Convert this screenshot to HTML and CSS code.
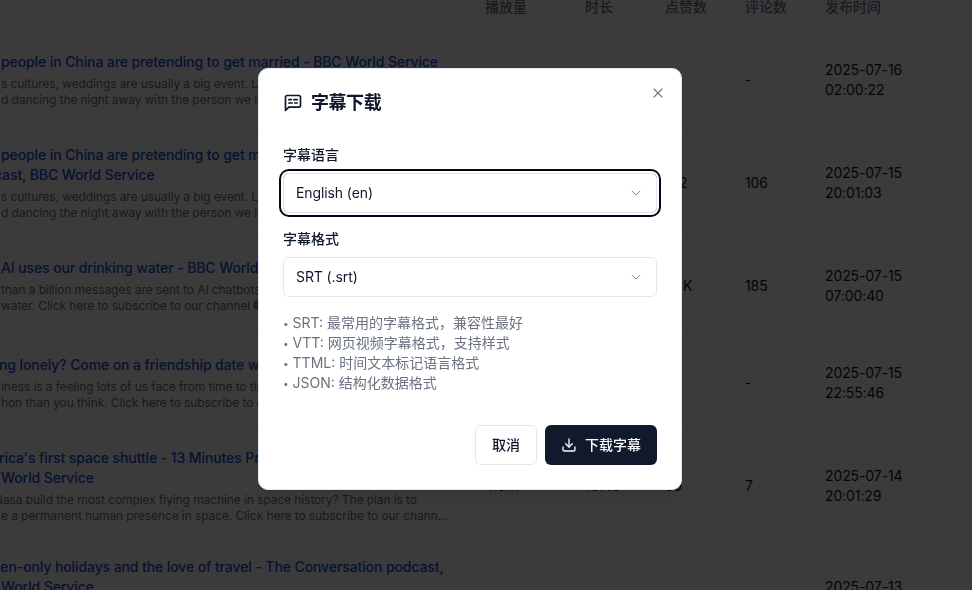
FILE: index.html
```html
<!DOCTYPE html>
<html lang="zh-CN">
<head>
  <meta charset="UTF-8" />
  <meta name="viewport" content="width=device-width, initial-scale=1.0"/>
  <title>字幕下载</title>
  <link rel="stylesheet" href="styles.css">
</head>
<body>
  <div class="table">
    <div class="row head">
      <div class="cell-title"></div>
      <div>播放量</div>
      <div>时长</div>
      <div>点赞数</div>
      <div>评论数</div>
      <div>发布时间</div>
    </div>

    <div class="row">
      <div class="cell-title">
        <div class="title">people in China are pretending to get married - BBC World Service</div>
        <div class="desc">s cultures, weddings are usually a big event. Lots of food, drinks</div>
        <div class="desc">d dancing the night away with the person we love</div>
      </div>
      <div>1.2M</div>
      <div>13:12</div>
      <div>82</div>
      <div>-</div>
      <div>2025-07-16<br>02:00:22</div>
    </div>

    <div class="row">
      <div class="cell-title">
        <div class="title">people in China are pretending to get married - The Conversation</div>
        <div class="title cut-7">cast, BBC World Service</div>
        <div class="desc">s cultures, weddings are usually a big event. Lots of food, drinks</div>
        <div class="desc">d dancing the night away with the person we love</div>
      </div>
      <div>86K</div>
      <div>26:40</div>
      <div>512</div>
      <div>106</div>
      <div>2025-07-15<br>20:01:03</div>
    </div>

    <div class="row">
      <div class="cell-title">
        <div class="title">AI uses our drinking water - BBC World Service</div>
        <div class="desc">than a billion messages are sent to AI chatbots every day</div>
        <div class="desc">water. Click here to subscribe to our channel <span class="emoji"></span></div>
      </div>
      <div>2.4M</div>
      <div>6:05</div>
      <div>1.2K</div>
      <div>185</div>
      <div>2025-07-15<br>07:00:40</div>
    </div>

    <div class="row">
      <div class="cell-title">
        <div class="title cut-2">ng lonely? Come on a friendship date with me</div>
        <div class="desc">iness is a feeling lots of us face from time to time</div>
        <div class="desc">hon than you think. Click here to subscribe to our channel</div>
      </div>
      <div>45K</div>
      <div>8:31</div>
      <div>21</div>
      <div>-</div>
      <div>2025-07-15<br>22:55:46</div>
    </div>

    <div class="row">
      <div class="cell-title">
        <div class="title cut-2">rica's first space shuttle - 13 Minutes Presents</div>
        <div class="title">World Service</div>
        <div class="desc cut-7">Nasa build the most complex flying machine in space history? The plan is to</div>
        <div class="desc">e a permanent human presence in space. Click here to subscribe to our chann...</div>
      </div>
      <div>4.0M</div>
      <div>13:45</div>
      <div>59</div>
      <div>7</div>
      <div>2025-07-14<br>20:01:29</div>
    </div>

    <div class="row">
      <div class="cell-title">
        <div class="title cut-9">hen-only holidays and the love of travel - The Conversation podcast,</div>
        <div class="title">World Service</div>
        <div class="desc">What makes a holiday feel different when you travel with friends?</div>
        <div class="desc tall">Click here to subscribe to our channel</div>
      </div>
      <div>31K</div>
      <div>26:28</div>
      <div>140</div>
      <div>22</div>
      <div>2025-07-13<br>20:01:12</div>
    </div>
  </div>

  <div class="overlay">
    <div class="dialog">
      <button class="close" aria-label="关闭">
        <svg class="icon-16" viewBox="0 0 24 24"><path d="M18 6 6 18"/><path d="m6 6 12 12"/></svg>
      </button>

      <div class="dialog-head">
        <svg class="icon-20" viewBox="0 0 24 24"><path d="M21 15a2 2 0 0 1-2 2H7l-4 4V5a2 2 0 0 1 2-2h14a2 2 0 0 1 2 2z"/><path d="M7 8h3"/><path d="M13 8h4"/><path d="M7 12h4"/><path d="M14 12h3"/></svg>
        <h2>字幕下载</h2>
      </div>

      <div class="field">
        <label>字幕语言</label>
        <div class="select focused">
          <span>English (en)</span>
          <svg class="icon-16 chevron" viewBox="0 0 24 24"><path d="m6 9 6 6 6-6"/></svg>
        </div>
      </div>

      <div class="field">
        <label>字幕格式</label>
        <div class="select">
          <span>SRT (.srt)</span>
          <svg class="icon-16 chevron" viewBox="0 0 24 24"><path d="m6 9 6 6 6-6"/></svg>
        </div>
      </div>

      <div class="notes">
        <p><span class="dot">•</span> SRT: 最常用的字幕格式，兼容性最好</p>
        <p><span class="dot">•</span> VTT: 网页视频字幕格式，支持样式</p>
        <p><span class="dot">•</span> TTML: 时间文本标记语言格式</p>
        <p><span class="dot">•</span> JSON: 结构化数据格式</p>
      </div>

      <div class="actions">
        <button class="btn">取消</button>
        <button class="btn primary">
          <svg class="icon-16" viewBox="0 0 24 24"><path d="M21 15v4a2 2 0 0 1-2 2H5a2 2 0 0 1-2-2v-4"/><path d="m7 10 5 5 5-5"/><path d="M12 15V3"/></svg>
          下载字幕
        </button>
      </div>
    </div>
  </div>
</body>
</html>
```

FILE: styles.css
```css
* {
  box-sizing: border-box;
}

body {
  margin: 0;
  height: 590px;
  overflow: hidden;
  background-color: #fff;
  color: #0f172a;
  font-family: Inter, "Noto Sans CJK SC", sans-serif;
  font-size: 14px;
  line-height: 20px;
  letter-spacing: -0.1px;
}

svg {
  fill: none;
  stroke: currentColor;
  stroke-width: 2;
  stroke-linecap: round;
  stroke-linejoin: round;
  flex-shrink: 0;
}

.icon-16 {
  width: 16px;
  height: 16px;
}

.icon-20 {
  width: 20px;
  height: 20px;
}

/* table behind the dialog */
.table {
  margin-top: -3px;
}

.row {
  display: grid;
  grid-template-columns: 485px 100px 80px 80px 80px 1fr;
  align-items: center;
  min-height: 97px;
  padding: 16px 0;
  border-bottom: 1px solid #e5e7eb;
  white-space: nowrap;
}

.row.head {
  min-height: 0;
  height: 35px;
  padding: 0 0 14px;
  color: #6b7280;
  font-weight: 500;
}

.cell-title {
  padding-left: 1px;
  overflow: hidden;
}

.title {
  color: #1d4ed8;
  font-weight: 500;
}

.title + .desc {
  margin-top: 4px;
}

.desc {
  color: #6b7280;
  font-size: 12px;
  line-height: 16px;
  letter-spacing: -0.09px;
}

.desc.tall {
  margin-bottom: 4px;
}

/* the table is scrolled sideways, these lines start left of the window */
.cut-2 {
  margin-left: -2px;
}

.cut-7 {
  margin-left: -7px;
}

.cut-9 {
  margin-left: -9px;
}

.emoji {
  display: inline-block;
  width: 10px;
  height: 10px;
  border-radius: 50%;
  background-color: #c08040;
}

/* dialog */
.overlay {
  position: fixed;
  inset: 0;
  padding: 68px 0 0 258px;
  background-color: rgba(0, 0, 0, 0.77);
}

.dialog {
  position: relative;
  width: 424px;
  padding: 24px;
  background-color: #fff;
  border: 1px solid #e2e8f0;
  border-radius: 10px;
  box-shadow: 0 10px 15px -3px rgba(0, 0, 0, 0.1), 0 4px 6px -4px rgba(0, 0, 0, 0.1);
}

.close {
  position: absolute;
  top: 16px;
  right: 15px;
  display: flex;
  padding: 0;
  border: none;
  background: none;
  color: #6b7280;
}

.close svg {
  stroke-width: 1.6;
}

.dialog-head {
  display: flex;
  align-items: center;
  gap: 8px;
  margin-bottom: 32px;
}

.dialog-head h2 {
  margin: 0;
  font-size: 18px;
  line-height: 20px;
  font-weight: 600;
  letter-spacing: -0.45px;
}

.field {
  margin-bottom: 16px;
}

.field label {
  display: block;
  margin-bottom: 8px;
  font-weight: 500;
  letter-spacing: 0;
}

.select {
  display: flex;
  align-items: center;
  justify-content: space-between;
  height: 40px;
  padding: 0 12px;
  border: 1px solid #e2e8f0;
  border-radius: 6px;
}

.select.focused {
  box-shadow: 0 0 0 2px #fff, 0 0 0 4px #020817;
}

.chevron {
  opacity: 0.5;
  stroke-width: 1.5;
}

.notes {
  color: #6b7280;
  letter-spacing: 0;
}

.notes p {
  height: 20px;
  margin: 0;
}

.dot {
  font-size: 10px;
  line-height: 1;
  vertical-align: 1px;
}

.actions {
  display: flex;
  justify-content: flex-end;
  gap: 8px;
  margin-top: 32px;
}

.btn {
  display: flex;
  align-items: center;
  gap: 8px;
  height: 40px;
  padding: 0 16px;
  background-color: #fff;
  border: 1px solid #e2e8f0;
  border-radius: 6px;
  color: #0f172a;
  font: inherit;
  font-weight: 500;
  letter-spacing: 0;
}

.btn.primary {
  border: none;
  background-color: #111a2d;
  color: #f8fafc;
}
```
